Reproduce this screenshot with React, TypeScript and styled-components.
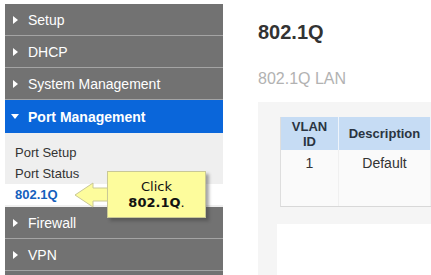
import styled, { createGlobalStyle } from 'styled-components';

const GlobalStyle = createGlobalStyle`
  html, body {
    margin: 0;
    padding: 0;
    background: #ffffff;
    font-family: 'Liberation Sans', Arial, sans-serif;
  }
`;

const Page = styled.div`
  display: flex;
  width: 431px;
  height: 275px;
  overflow: hidden;
  position: relative;
`;

const Sidebar = styled.div`
  display: flex;
  flex-direction: column;
  width: 218px;
  margin: 4px 0 0 5px;
  background: #727272;
  flex-shrink: 0;
`;

const MenuRow = styled.div<{ $active?: boolean }>`
  display: flex;
  align-items: center;
  height: ${({ $active }) => ($active ? '33px' : '31px')};
  padding-left: ${({ $active }) => ($active ? '6px' : '7px')};
  gap: 9px;
  color: #ffffff;
  font-size: 14px;
  font-weight: ${({ $active }) => ($active ? 'bold' : 'normal')};
  background: ${({ $active }) => ($active ? '#0a66da' : '#727272')};
  border-bottom: ${({ $active }) => ($active ? 'none' : '1px solid #a4a4a4')};
`;

const Caret = styled.span<{ $open?: boolean }>`
  display: inline-block;
  width: 0;
  height: 0;
  ${({ $open }) =>
    $open
      ? `
    border-left: 4px solid transparent;
    border-right: 4px solid transparent;
    border-top: 5px solid #ffffff;
  `
      : `
    border-top: 4px solid transparent;
    border-bottom: 4px solid transparent;
    border-left: 5px solid #ffffff;
    margin-left: 1px;
    margin-right: 1px;
  `}
`;

const SubMenu = styled.div`
  display: flex;
  flex-direction: column;
  background: #efefef;
  padding: 9px 0 2px;
`;

const SubItem = styled.div<{ $current?: boolean }>`
  display: flex;
  align-items: center;
  height: 21px;
  padding-left: 10px;
  font-size: 13px;
  color: ${({ $current }) => ($current ? '#1560bd' : '#333333')};
  font-weight: ${({ $current }) => ($current ? 'bold' : 'normal')};
  background: ${({ $current }) => ($current ? '#ffffff' : 'transparent')};
`;

const Main = styled.div`
  display: flex;
  flex-direction: column;
  flex: 1;
  margin-left: 35px;
  min-width: 0;
`;

const Title = styled.h1`
  margin: 21px 0 0;
  font-size: 20px;
  font-weight: bold;
  color: #333333;
  line-height: 23px;
`;

const Subtitle = styled.div`
  margin-top: 26px;
  font-size: 16px;
  color: #b2b2b2;
  line-height: 18px;
`;

const Panel = styled.div`
  flex: 1;
  margin-top: 14px;
  background: #f5f5f5;
  padding: 15px 0 0 22px;
  display: flex;
  flex-direction: column;
`;

const Table = styled.div`
  display: grid;
  grid-template-columns: 58px 92px 120px;
  width: 270px;
  border-left: 1px solid #dedede;
  border-bottom: 1px solid #d8d8d8;
  background: #fafafa;
`;

const HeadCell = styled.div<{ $last?: boolean }>`
  display: flex;
  align-items: center;
  justify-content: center;
  text-align: center;
  height: 33px;
  background: #c6dcf4;
  color: #2a3441;
  font-size: 13px;
  font-weight: bold;
  line-height: 15px;
  border-right: ${({ $last }) => ($last ? 'none' : '1px solid #eef4fb')};
`;

const BodyCell = styled.div<{ $last?: boolean }>`
  display: flex;
  justify-content: center;
  padding-top: 5px;
  height: 51px;
  font-size: 14px;
  color: #333333;
  border-right: ${({ $last }) => ($last ? 'none' : '1px solid #f0f0f0')};
`;

const WhiteBox = styled.div`
  flex: 1;
  margin: 17px 0 0 -3px;
  background: #ffffff;
`;

const Callout = styled.div`
  position: absolute;
  left: 74px;
  top: 171px;
  display: flex;
  align-items: center;
`;

const CalloutBox = styled.div`
  display: flex;
  flex-direction: column;
  align-items: center;
  justify-content: center;
  width: 97px;
  height: 45px;
  margin-left: -1px;
  background: #fdfc9c;
  border: 1px solid #c9c896;
  box-shadow: 3px 3px 3px rgba(60, 60, 60, 0.45);
  font-family: 'DejaVu Sans', Verdana, sans-serif;
  font-size: 13px;
  color: #111111;
  line-height: 16px;
`;

const Strong = styled.span`
  font-weight: bold;
`;

const menuTop = ['Setup', 'DHCP', 'System Management'];
const menuBottom = ['Firewall', 'VPN'];

export default function App() {
  return (
    <>
      <GlobalStyle />
      <Page>
        <Sidebar>
          {menuTop.map((label) => (
            <MenuRow key={label}>
              <Caret />
              {label}
            </MenuRow>
          ))}
          <MenuRow $active>
            <Caret $open />
            Port Management
          </MenuRow>
          <SubMenu>
            <SubItem>Port Setup</SubItem>
            <SubItem>Port Status</SubItem>
            <SubItem $current>802.1Q</SubItem>
          </SubMenu>
          {menuBottom.map((label) => (
            <MenuRow key={label}>
              <Caret />
              {label}
            </MenuRow>
          ))}
        </Sidebar>
        <Main>
          <Title>802.1Q</Title>
          <Subtitle>802.1Q LAN</Subtitle>
          <Panel>
            <Table>
              <HeadCell>
                VLAN
                <br />
                ID
              </HeadCell>
              <HeadCell>Description</HeadCell>
              <HeadCell $last />
              <BodyCell>1</BodyCell>
              <BodyCell>Default</BodyCell>
              <BodyCell $last />
            </Table>
            <WhiteBox />
          </Panel>
        </Main>
        <Callout>
          <svg width="34" height="26" viewBox="0 0 34 26">
            <polygon
              points="1,13 19,1 19,6 34,6 34,19 19,19 19,25"
              fill="#fdfc9c"
              stroke="#c9c896"
              strokeWidth="1"
            />
          </svg>
          <CalloutBox>
            <span>Click</span>
            <span>
              <Strong>802.1Q</Strong>.
            </span>
          </CalloutBox>
        </Callout>
      </Page>
    </>
  );
}
